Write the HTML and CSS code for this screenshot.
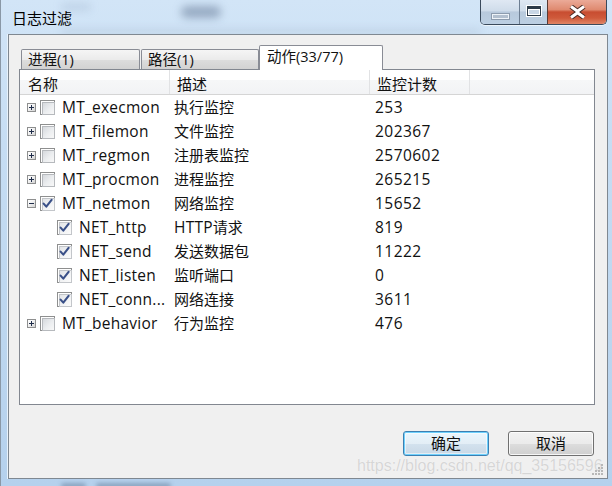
FILE: index.html
```html
<!DOCTYPE html>
<html>
<head>
<meta charset="utf-8">
<link rel="stylesheet" href="styles.css">
</head>
<body>
<div class="window">
  <div class="titlebar">
    <span class="glass-blur gb1"></span>
    <span class="glass-blur gb2"></span>
    <span class="glass-blur gb3"></span>
    <div class="title">日志过滤</div>
    <div class="caption-btns">
      <div class="cbtn cmin"><span class="min-glyph"></span></div>
      <div class="cbtn cmax"><span class="max-glyph"></span></div>
      <div class="cbtn cclose">
        <svg width="19" height="14" viewBox="0 0 19 14">
          <path d="M3 1.5 L9.5 6.2 L16 1.5 M3 12.5 L9.5 7.8 L16 12.5" fill="none" stroke="#4a2a24" stroke-width="5" stroke-linejoin="round"/>
          <path d="M3 1.5 L9.5 6.2 L16 1.5 M3 12.5 L9.5 7.8 L16 12.5" fill="none" stroke="#ffffff" stroke-width="3" stroke-linejoin="round"/>
        </svg>
      </div>
    </div>
  </div>
  <div class="frame-row">
    <div class="content">
      <div class="tabs">
        <div class="tab t1">进程(1)</div>
        <div class="tab t2">路径(1)</div>
        <div class="tab active">动作(33/77)</div>
      </div>
      <div class="panel">
        <div class="lv-header">
          <div class="hcell c1">名称</div>
          <div class="hcell c2">描述</div>
          <div class="hcell c3">监控计数</div>
          <div class="hcell c4"></div>
        </div>
        <div class="lv-row">
          <div class="cell name"><span class="exp plus"></span><span class="chk"></span><span class="label">MT_execmon</span></div>
          <div class="cell desc">执行监控</div>
          <div class="cell cnt">253</div>
        </div>
        <div class="lv-row">
          <div class="cell name"><span class="exp plus"></span><span class="chk"></span><span class="label">MT_filemon</span></div>
          <div class="cell desc">文件监控</div>
          <div class="cell cnt">202367</div>
        </div>
        <div class="lv-row">
          <div class="cell name"><span class="exp plus"></span><span class="chk"></span><span class="label">MT_regmon</span></div>
          <div class="cell desc">注册表监控</div>
          <div class="cell cnt">2570602</div>
        </div>
        <div class="lv-row">
          <div class="cell name"><span class="exp plus"></span><span class="chk"></span><span class="label">MT_procmon</span></div>
          <div class="cell desc">进程监控</div>
          <div class="cell cnt">265215</div>
        </div>
        <div class="lv-row">
          <div class="cell name"><span class="exp minus"></span><span class="chk on"><svg width="11" height="11" viewBox="0 0 11 11"><path d="M1.6 5.6 L4.3 8.6 L9.6 1.8" fill="none" stroke="#3a5088" stroke-width="2.1" stroke-linecap="round" stroke-linejoin="round"/></svg></span><span class="label">MT_netmon</span></div>
          <div class="cell desc">网络监控</div>
          <div class="cell cnt">15652</div>
        </div>
        <div class="lv-row">
          <div class="cell name child"><span class="chk on"><svg width="11" height="11" viewBox="0 0 11 11"><path d="M1.6 5.6 L4.3 8.6 L9.6 1.8" fill="none" stroke="#3a5088" stroke-width="2.1" stroke-linecap="round" stroke-linejoin="round"/></svg></span><span class="label">NET_http</span></div>
          <div class="cell desc"><span class="lat">HTTP</span>请求</div>
          <div class="cell cnt">819</div>
        </div>
        <div class="lv-row">
          <div class="cell name child"><span class="chk on"><svg width="11" height="11" viewBox="0 0 11 11"><path d="M1.6 5.6 L4.3 8.6 L9.6 1.8" fill="none" stroke="#3a5088" stroke-width="2.1" stroke-linecap="round" stroke-linejoin="round"/></svg></span><span class="label">NET_send</span></div>
          <div class="cell desc">发送数据包</div>
          <div class="cell cnt">11222</div>
        </div>
        <div class="lv-row">
          <div class="cell name child"><span class="chk on"><svg width="11" height="11" viewBox="0 0 11 11"><path d="M1.6 5.6 L4.3 8.6 L9.6 1.8" fill="none" stroke="#3a5088" stroke-width="2.1" stroke-linecap="round" stroke-linejoin="round"/></svg></span><span class="label">NET_listen</span></div>
          <div class="cell desc">监听端口</div>
          <div class="cell cnt">0</div>
        </div>
        <div class="lv-row">
          <div class="cell name child"><span class="chk on"><svg width="11" height="11" viewBox="0 0 11 11"><path d="M1.6 5.6 L4.3 8.6 L9.6 1.8" fill="none" stroke="#3a5088" stroke-width="2.1" stroke-linecap="round" stroke-linejoin="round"/></svg></span><span class="label">NET_conn...</span></div>
          <div class="cell desc">网络连接</div>
          <div class="cell cnt">3611</div>
        </div>
        <div class="lv-row">
          <div class="cell name"><span class="exp plus"></span><span class="chk"></span><span class="label">MT_behavior</span></div>
          <div class="cell desc">行为监控</div>
          <div class="cell cnt">476</div>
        </div>
      </div>
      <div class="buttons">
        <div class="btn default">确定</div>
        <div class="btn">取消</div>
      </div>
      <div class="watermark">https://blog.csdn.net/qq_35156596</div>
      <svg class="grip" width="12" height="12" viewBox="0 0 12 12">
        <g fill="#b8b8b8">
          <rect x="9" y="1" width="2" height="2"/>
          <rect x="6" y="4" width="2" height="2"/><rect x="9" y="4" width="2" height="2"/>
          <rect x="3" y="7" width="2" height="2"/><rect x="6" y="7" width="2" height="2"/><rect x="9" y="7" width="2" height="2"/>
          <rect x="0" y="10" width="2" height="2"/><rect x="3" y="10" width="2" height="2"/><rect x="6" y="10" width="2" height="2"/><rect x="9" y="10" width="2" height="2"/>
        </g>
      </svg>
    </div>
  </div>
  <div class="bottom-frame">
    <span class="glass-blur gb4"></span>
    <span class="glass-blur gb5"></span>
  </div>
</div>
</body>
</html>
```

FILE: styles.css
```css
* { box-sizing: border-box; }
html, body { margin: 0; padding: 0; }
body {
  width: 612px;
  height: 486px;
  overflow: hidden;
  font-family: "Open Sans", "Noto Sans CJK SC", sans-serif;
  font-size: 15px;
  color: #111;
}
.window {
  width: 612px;
  height: 486px;
  position: relative;
  overflow: hidden;
  background: linear-gradient(180deg, #d2e5f7 0%, #c6ddf3 30%, #bcd6ef 70%, #b5d1ed 100%);
  border-left: 1px solid #8a98a6;
  display: flex;
  flex-direction: column;
}
.titlebar {
  height: 34px;
  flex: none;
  display: flex;
  align-items: flex-start;
  position: relative;
}
.glass-blur {
  position: absolute;
  border-radius: 6px;
  filter: blur(4px);
}
.gb1 { left: 180px; top: 6px; width: 40px; height: 12px; background: rgba(80, 100, 130, 0.45); }
.gb2 { left: 60px; top: 4px; width: 30px; height: 6px; background: rgba(120, 140, 170, 0.25); }
.gb3 { left: 60px; top: 30px; width: 420px; height: 4px; background: rgba(110, 130, 160, 0.25); }
.title {
  padding: 9px 0 0 11px;
  font-size: 15px;
  line-height: 18px;
  color: #000;
  position: relative;
}
.caption-btns {
  margin-left: auto;
  margin-right: 5px;
  display: flex;
  height: 25px;
  border: 1px solid #3a4a5c;
  border-top: none;
  border-radius: 0 0 5px 5px;
  overflow: hidden;
  position: relative;
  box-shadow: 0 1px 0 rgba(255,255,255,0.6);
}
.cbtn {
  height: 100%;
  display: flex;
  align-items: center;
  justify-content: center;
}
.cmin {
  width: 39px;
  background: linear-gradient(180deg, #dfe8f3 0%, #cfdcea 45%, #b8c9dc 50%, #bccfe3 100%);
  border-right: 1px solid #6d7e92;
}
.min-glyph {
  width: 17px;
  height: 5px;
  margin-top: 9px;
  background: #b3c0cf;
  border: 1px solid #eef3f8;
  box-shadow: 0 0 0 1px #8d9cae;
}
.cmax {
  width: 28px;
  background: linear-gradient(180deg, #dfe8f3 0%, #cfdcea 45%, #b8c9dc 50%, #bccfe3 100%);
  border-right: 1px solid #5a3a34;
}
.max-glyph {
  width: 14px;
  height: 10px;
  margin-top: -2px;
  border: 1px solid #2d3a48;
  border-top-width: 3px;
  box-shadow: inset 0 0 0 1px #ffffff, 0 0 0 1px #ffffff;
  background: #c9d6e5;
}
.cclose {
  width: 58px;
  background: linear-gradient(180deg, #ebaa98 0%, #df8a70 40%, #c84d31 50%, #cf5a3b 75%, #e08566 100%);
}
.cclose svg { margin-top: -1px; }

.frame-row {
  flex: none;
  display: flex;
  padding-left: 7px;
}
.content {
  width: 600px;
  height: 445px;
  border: 1px solid #7f8891;
  background: #f0f0f0;
  position: relative;
  overflow: hidden;
  padding-left: 10px;
  box-shadow: -1px 0 0 #e8f2fb;
}
.tabs {
  margin-top: 10px;
  margin-left: 2px;
  height: 24px;
  display: flex;
  align-items: flex-end;
  position: relative;
  z-index: 2;
}
.tab {
  height: 20px;
  border: 1px solid #898c95;
  border-bottom: none;
  border-radius: 2px 2px 0 0;
  background: linear-gradient(180deg, #f5f5f5 0%, #ebebeb 50%, #dddddd 51%, #d2d2d2 100%);
  font-size: 14.5px;
  line-height: 19px;
  padding-left: 6px;
  white-space: nowrap;
}
.t1 { width: 119px; margin-right: 1px; }
.t2 { width: 118px; }
.active {
  width: 124px;
  height: 25px;
  margin-bottom: -1px;
  background: #ffffff;
  padding-left: 7px;
  line-height: 22px;
}
.panel {
  width: 576px;
  height: 336px;
  border: 1px solid #828790;
  background: #ffffff;
  position: relative;
  z-index: 1;
}
.lv-header {
  display: grid;
  grid-template-columns: 150px 200px 100px 1fr;
  height: 25px;
  border-bottom: 1px solid #d5d5d5;
  background: linear-gradient(180deg, #ffffff 0%, #ffffff 42%, #f6f7f8 43%, #f2f3f5 100%);
}
.hcell {
  border-right: 1px solid #e1e2e4;
  padding: 5px 0 0 7px;
  line-height: 18px;
  white-space: nowrap;
}
.hcell.c1 { padding-left: 8px; }
.hcell.c4 { border-right: none; }
.lv-row {
  display: grid;
  grid-template-columns: 150px 200px 100px 1fr;
  height: 24px;
}
.cell {
  display: flex;
  align-items: center;
  white-space: nowrap;
  line-height: 20px;
  overflow: hidden;
}
.cell.name { padding-left: 7px; }
.cell.name.child { padding-left: 37px; }
.cell.desc { padding-left: 4px; }
.cell.cnt { padding-left: 5px; }
.label, .cell.cnt, .lat {
  font-size: 15.5px;
  letter-spacing: 0.25px;
}
.cell.cnt { letter-spacing: 0.45px; }
.exp {
  width: 9px;
  height: 9px;
  border: 1px solid #8e8f8f;
  background: linear-gradient(135deg, #ffffff 0%, #f4f4f4 40%, #d2d2d2 100%);
  position: relative;
  margin-right: 4px;
  margin-top: 1px;
  flex: none;
}
.exp::before {
  content: "";
  position: absolute;
  left: 1px;
  top: 3px;
  width: 5px;
  height: 1px;
  background: #1f2d4a;
}
.exp.plus::after {
  content: "";
  position: absolute;
  left: 3px;
  top: 1px;
  width: 1px;
  height: 5px;
  background: #1f2d4a;
}
.chk {
  width: 15px;
  height: 15px;
  border: 1px solid #8e8f8f;
  background: #ffffff;
  padding: 1px;
  margin-right: 7px;
  position: relative;
  flex: none;
}
.chk::before {
  content: "";
  display: block;
  width: 100%;
  height: 100%;
  border: 1px solid #b6b9bd;
  background: linear-gradient(135deg, #d6d9dd 0%, #eceef0 55%, #f8f8f8 100%);
}
.chk.on::before {
  border-color: #c3c6ca;
  background: linear-gradient(135deg, #e2e4e7 0%, #f2f3f4 55%, #fbfbfb 100%);
}
.chk svg {
  position: absolute;
  left: 1px;
  top: 1px;
}
.buttons {
  margin-top: 26px;
  display: flex;
  justify-content: flex-end;
  gap: 19px;
  padding-right: 13px;
}
.btn {
  width: 86px;
  height: 25px;
  border: 1px solid #707070;
  border-radius: 3px;
  background: linear-gradient(180deg, #f2f2f2 0%, #ebebeb 50%, #dddddd 51%, #cfcfcf 100%);
  box-shadow: inset 0 0 0 1px rgba(255,255,255,0.8);
  text-align: center;
  font-size: 15px;
  line-height: 22px;
}
.btn.default {
  border-color: #3c7fb1;
  background: linear-gradient(180deg, #eaf6fd 0%, #e3eef6 50%, #d3e2ee 51%, #c8d8e6 100%);
  box-shadow: inset 0 0 0 1px #6fd1fd, inset 0 0 0 2px rgba(255,255,255,0.5);
}
.watermark {
  position: absolute;
  left: 348px;
  top: 422px;
  font-family: "Liberation Sans", Arial, sans-serif;
  font-size: 16px;
  line-height: 18px;
  color: #d6d6d6;
  white-space: nowrap;
  text-shadow: 0 0 1px #ffffff;
}
.grip {
  position: absolute;
  right: 3px;
  bottom: 3px;
}
.bottom-frame {
  flex: 1;
  position: relative;
}
.gb4 { left: 60px; top: 4px; width: 25px; height: 6px; background: rgba(60, 80, 110, 0.35); filter: blur(2px); }
.gb5 { left: 95px; top: 4px; width: 75px; height: 6px; background: rgba(60, 80, 110, 0.35); filter: blur(2px); }
```
